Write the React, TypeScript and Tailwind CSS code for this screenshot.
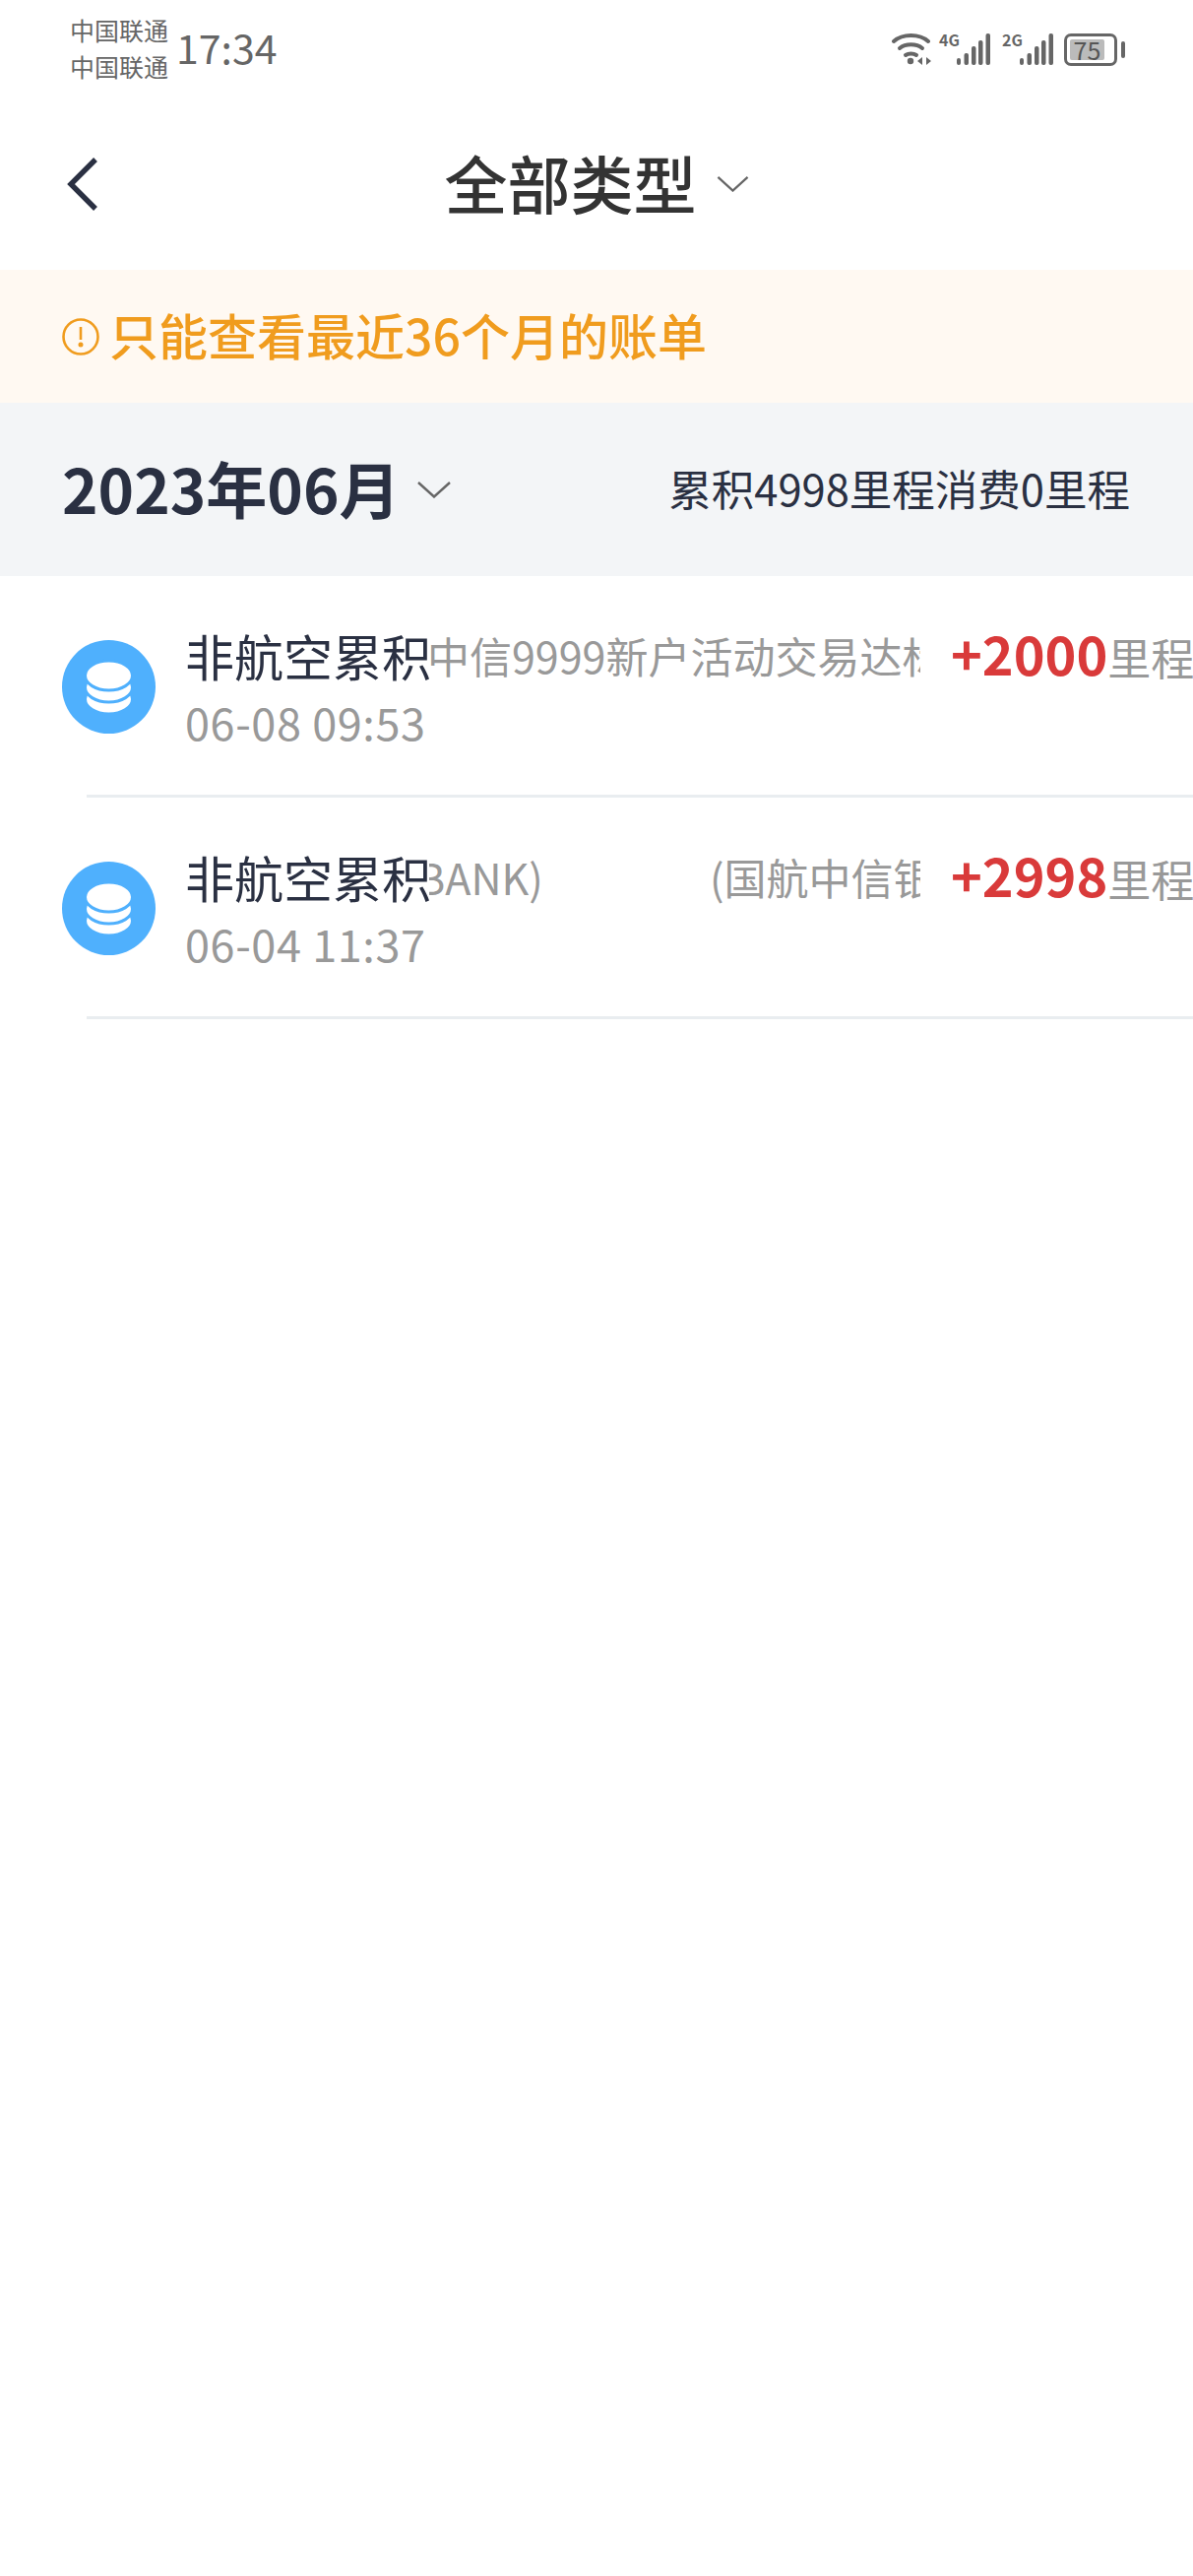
const font = { cjk: "font-['Noto_Sans_CJK_SC','Noto_Sans',sans-serif]" };

const SignalBars = () => (
  <svg width="34" height="32" viewBox="0 0 34 32" fill="#666">
    <rect x="0" y="25" width="4" height="7" rx="2" />
    <rect x="7.5" y="20" width="4.5" height="12" rx="2" />
    <rect x="15" y="13" width="4.5" height="19" rx="2" />
    <rect x="22" y="7" width="4.5" height="25" rx="2" />
    <rect x="29.5" y="0" width="4.5" height="32" rx="2" />
  </svg>
);

const Wifi = () => (
  <svg width="40" height="34" viewBox="0 0 40 34" fill="none" stroke="#666" strokeWidth="4" strokeLinecap="round">
    <path d="M2 9C11 1 28 1 37 9" />
    <path d="M8 16C14 11 25 11 31 16" />
    <path d="M14 23C17 21 22 21 25 23" />
    <circle cx="19" cy="29" r="3.2" fill="#666" stroke="none" />
    <path d="M31 25v8l-5-4z" fill="#666" stroke="none" />
    <path d="M35 25v8l5-4z" fill="#666" stroke="none" />
  </svg>
);

const Chevron = ({ className }: { className: string }) => (
  <svg className={className} viewBox="0 0 34 17" fill="none" stroke="#666" strokeWidth="2.4">
    <path d="M1 1L17 15.5L33 1" />
  </svg>
);

const CoinIcon = () => (
  <svg width="95" height="95" viewBox="0 0 95 95" className="shrink-0">
    <circle cx="47.5" cy="47.5" r="47.5" fill="#4fb0fd" />
    <g fill="#fff" stroke="#4fb0fd" strokeWidth="3">
      <ellipse cx="47.5" cy="60" rx="24" ry="15" />
      <ellipse cx="47.5" cy="48" rx="24" ry="15" />
      <ellipse cx="47.5" cy="36" rx="24" ry="15" />
    </g>
  </svg>
);

const Row = ({ date, amount, children }: { date: string; amount: string; children: React.ReactNode }) => (
  <div className="h-[225px] pl-[63px] flex items-center relative overflow-hidden">
    <CoinIcon />
    <div className="ml-[30px] flex flex-col pt-[3px] w-[248px] shrink-0">
      <div className="text-[50px] leading-[68px] text-[#2a3042] whitespace-nowrap">非航空累积</div>
      <div className="text-[45px] leading-[68px] tracking-[0.6px] text-[#999] whitespace-nowrap">{date}</div>
    </div>
    <div className="w-[499px] shrink-0 self-start mt-[46px] overflow-hidden">
      <div className="text-[43px] leading-[68px] text-[#999] whitespace-nowrap -ml-[2px]">{children}</div>
    </div>
    <div className="ml-[31px] shrink-0 self-start mt-[40px] flex items-baseline whitespace-nowrap">
      <span className="text-[54px] leading-[76px] font-bold text-[#d93a3a]">{amount}</span>
      <span className="text-[44px] text-[#999]">里程</span>
    </div>
    <div className="absolute right-0 bottom-0 left-[88px] h-[3px] bg-[#e9edf0]" />
  </div>
);

export default function App() {
  return (
    <div className={`w-full h-[2616px] bg-white ${font.cjk}`}>
      {/* status bar */}
      <div className="h-[100px] flex items-center pl-[71px] pr-[69px] text-[#666]">
        <div className="flex flex-col text-[25px] leading-[37px] whitespace-nowrap pb-[3px]">
          <span>中国联通</span>
          <span>中国联通</span>
        </div>
        <span className="ml-[8px] text-[41px] leading-none pb-[5px]">17:34</span>
        <div className="ml-auto flex items-center">
          <Wifi />
          <div className="ml-[8px] relative w-[52px] h-[32px]">
            <span className="absolute left-0 -top-[5px] text-[16px] font-bold leading-[22px]">4G</span>
            <div className="absolute right-0 top-0"><SignalBars /></div>
          </div>
          <div className="ml-[12px] relative w-[52px] h-[32px]">
            <span className="absolute left-0 -top-[5px] text-[16px] font-bold leading-[22px]">2G</span>
            <div className="absolute right-0 top-0"><SignalBars /></div>
          </div>
          <div className="ml-[11px] w-[54px] h-[33px] rounded-[7px] border-[3px] border-[#666] p-[3px] flex">
            <div className="w-[35px] bg-[#bbb] rounded-[2px] flex items-center justify-center text-[25px] leading-none text-[#555]">75</div>
          </div>
          <div className="ml-[4px] w-[4px] h-[17px] rounded-full bg-[#666]" />
        </div>
      </div>

      {/* header */}
      <div className="h-[174px] relative flex items-center justify-center">
        <svg className="absolute left-[68px] top-[60px]" width="32" height="54" viewBox="0 0 32 54" fill="none" stroke="#2a3042" strokeWidth="5.4">
          <path d="M29 2L4 27L29 52" />
        </svg>
        <div className="flex items-center">
          <span className="text-[64px] leading-none font-medium text-[#333] pb-[6px]">全部类型</span>
          <Chevron className="w-[33px] h-[16px] ml-[20px]" />
        </div>
      </div>

      {/* notice */}
      <div className="h-[135px] bg-[#fff9f2] flex items-center pl-[63px]">
        <svg width="38" height="38" viewBox="0 0 38 38" fill="none" stroke="#f09c1e" strokeWidth="2.6">
          <circle cx="19" cy="19" r="17.5" />
          <path d="M19 9v13" />
          <circle cx="19" cy="27" r="1.2" fill="#f09c1e" />
        </svg>
        <span className="ml-[10px] text-[50px] leading-none font-medium text-[#f09c1e] whitespace-nowrap pb-[5px]">只能查看最近36个月的账单</span>
      </div>

      {/* month */}
      <div className="h-[176px] bg-[#f3f5f7] flex items-center pl-[63px] pr-[64px]">
        <span className="text-[62px] leading-none font-bold text-[#2a3042] whitespace-nowrap pb-[5px]">2023年06月</span>
        <Chevron className="w-[34px] h-[17px] ml-[18px]" />
        <span className="ml-auto text-[43.5px] leading-none text-[#2a3042] whitespace-nowrap pb-[3px]">累积4998里程消费0里程</span>
      </div>

      <Row date="06-08 09:53" amount="+2000">中信9999新户活动交易达标奖励</Row>
      <Row date="06-04 11:37" amount="+2998">
        <span className="inline-block -ml-[10px] w-[297px]">BANK)</span>
        (国航中信银行)
      </Row>
    </div>
  );
}
